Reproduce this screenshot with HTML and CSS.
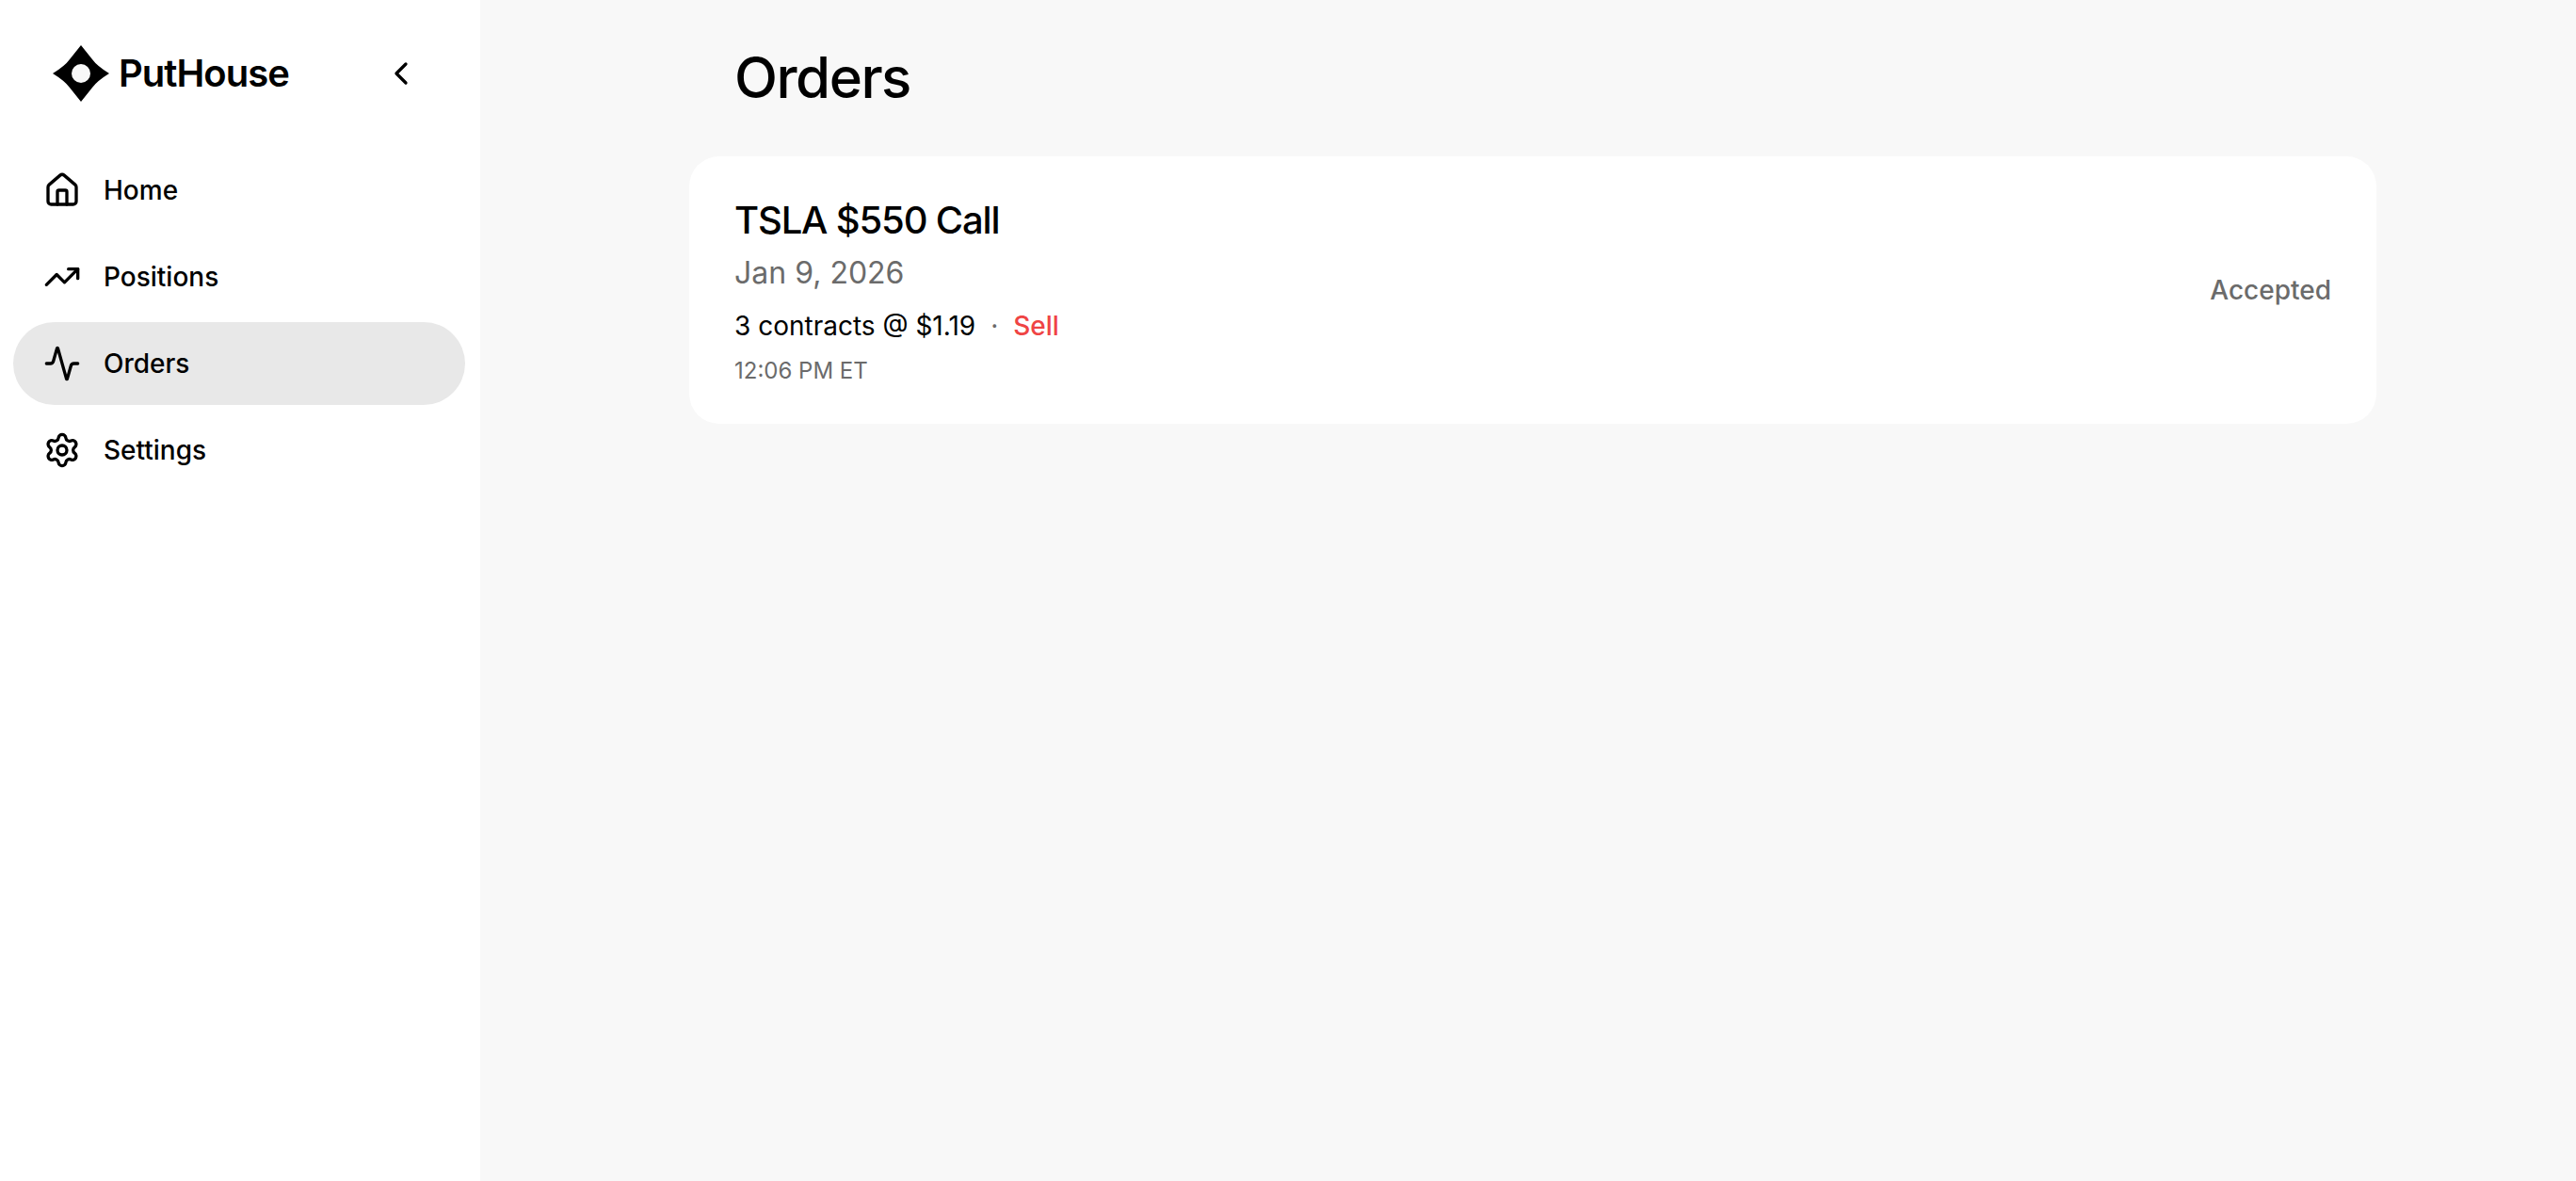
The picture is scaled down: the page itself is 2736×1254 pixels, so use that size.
FILE: index.html
```html
<!DOCTYPE html>
<html lang="en">
<head>
  <meta charset="UTF-8" />
  <meta name="viewport" content="width=device-width, initial-scale=1" />
  <title>PutHouse - Orders</title>
  <link rel="stylesheet" href="styles.css">
</head>
<body>
  <!-- Sidebar -->
  <aside class="sidebar">
    <div class="sidebar-header">
      <a class="brand" href="#">
        <svg class="brand-mark" viewBox="0 0 60 60">
          <path d="M30 0 L42 15 Q47 22 60 30 Q47 38 42 45 L30 60 L18 45 Q13 38 0 30 Q13 22 18 15 Z" />
          <circle cx="30" cy="30" r="10" fill="#f8f8f8" />
        </svg>
        <span class="brand-name">PutHouse</span>
      </a>
      <button class="collapse-btn" aria-label="Collapse sidebar">
        <svg class="icon" viewBox="0 0 24 24"><path d="m15 18-6-6 6-6" /></svg>
      </button>
    </div>

    <nav class="nav">
      <a class="nav-item" href="#">
        <svg class="icon" viewBox="0 0 24 24">
          <path d="M15 21v-8a1 1 0 0 0-1-1h-4a1 1 0 0 0-1 1v8" />
          <path d="M3 10a2 2 0 0 1 .709-1.528l7-5.999a2 2 0 0 1 2.582 0l7 5.999A2 2 0 0 1 21 10v9a2 2 0 0 1-2 2H5a2 2 0 0 1-2-2z" />
        </svg>
        <span>Home</span>
      </a>
      <a class="nav-item" href="#">
        <svg class="icon" viewBox="0 0 24 24">
          <path d="M16 7h6v6" />
          <path d="m22 7-8.5 8.5-5-5L2 17" />
        </svg>
        <span>Positions</span>
      </a>
      <a class="nav-item active" href="#">
        <svg class="icon" viewBox="0 0 24 24">
          <path d="M22 12h-2.48a2 2 0 0 0-1.93 1.46l-2.35 8.36a.25.25 0 0 1-.48 0L9.24 2.18a.25.25 0 0 0-.48 0l-2.35 8.36A2 2 0 0 1 4.49 12H2" />
        </svg>
        <span>Orders</span>
      </a>
      <a class="nav-item" href="#">
        <svg class="icon" viewBox="0 0 24 24">
          <path d="M9.671 4.136a2.34 2.34 0 0 1 4.659 0 2.34 2.34 0 0 0 3.319 1.915 2.34 2.34 0 0 1 2.33 4.033 2.34 2.34 0 0 0 0 3.831 2.34 2.34 0 0 1-2.33 4.033 2.34 2.34 0 0 0-3.319 1.915 2.34 2.34 0 0 1-4.659 0 2.34 2.34 0 0 0-3.32-1.915 2.34 2.34 0 0 1-2.33-4.033 2.34 2.34 0 0 0 0-3.831A2.34 2.34 0 0 1 6.35 6.051a2.34 2.34 0 0 0 3.319-1.915" />
          <circle cx="12" cy="12" r="3" />
        </svg>
        <span>Settings</span>
      </a>
    </nav>
  </aside>

  <!-- Orders list -->
  <main class="main">
    <div class="content">
      <h1 class="page-title">Orders</h1>

      <div class="order-card">
        <div class="order-info">
          <h2 class="order-name">TSLA $550 Call</h2>
          <p class="order-date">Jan 9, 2026</p>
          <p class="order-detail">
            <span>3 contracts @ $1.19</span>
            <span class="dot">·</span>
            <span class="side-sell">Sell</span>
          </p>
          <p class="order-time">12:06 PM ET</p>
        </div>
        <span class="order-status">Accepted</span>
      </div>
    </div>
  </main>
</body>
</html>
```

FILE: styles.css
```css
* {
  box-sizing: border-box;
  margin: 0;
  padding: 0;
}

body {
  font-family: Inter, "Liberation Sans", sans-serif;
  background: #f8f8f8;
  color: #000;
  display: flex;
  min-height: 100vh;
}

.sidebar {
  width: 510px;
  flex-shrink: 0;
  background: #fff;
}

.sidebar-header {
  display: flex;
  align-items: center;
  justify-content: space-between;
  height: 156px;
  padding: 0 64px 0 56px;
}

.brand {
  display: flex;
  align-items: center;
  gap: 10px;
  color: #000;
  text-decoration: none;
}

.brand-mark {
  width: 60px;
  height: 60px;
}

.brand-name {
  font-size: 40px;
  font-weight: 600;
  line-height: 48px;
  letter-spacing: -0.025em;
}

.collapse-btn {
  display: flex;
  background: none;
  border: none;
  cursor: pointer;
}

.icon {
  width: 40px;
  height: 40px;
  fill: none;
  stroke: #000;
  stroke-width: 2;
  stroke-linecap: round;
  stroke-linejoin: round;
}

.nav {
  display: flex;
  flex-direction: column;
  gap: 4px;
  padding: 2px 16px 0 14px;
}

.nav-item {
  display: flex;
  align-items: center;
  gap: 24px;
  height: 88px;
  padding: 0 32px;
  border-radius: 44px;
  font-size: 28px;
  font-weight: 500;
  color: #000;
  text-decoration: none;
}

.nav-item.active {
  background: #e8e8e8;
}

.main {
  flex: 1;
}

.content {
  width: 1792px;
  margin-left: 222px;
}

.page-title {
  height: 166px;
  padding: 46px 48px 0;
  font-size: 60px;
  font-weight: 500;
  line-height: 72px;
  letter-spacing: -0.025em;
}

.order-card {
  display: flex;
  align-items: center;
  justify-content: space-between;
  height: 284px;
  padding: 0 48px;
  background: #fff;
  border-radius: 32px;
}

.order-name {
  font-size: 40px;
  font-weight: 500;
  line-height: 56px;
  letter-spacing: -1.15px;
}

.order-date {
  margin-top: 4px;
  font-size: 32px;
  line-height: 48px;
  color: #6b6b6b;
}

.order-detail {
  display: flex;
  gap: 16px;
  margin-top: 12px;
  font-size: 28px;
  line-height: 40px;
}

.dot {
  color: #6b6b6b;
}

.side-sell {
  font-weight: 500;
  color: #ef4444;
}

.order-time {
  margin-top: 12px;
  font-size: 24px;
  line-height: 32px;
  color: #6b6b6b;
}

.order-status {
  font-size: 28px;
  font-weight: 500;
  color: #6b6b6b;
}
```
